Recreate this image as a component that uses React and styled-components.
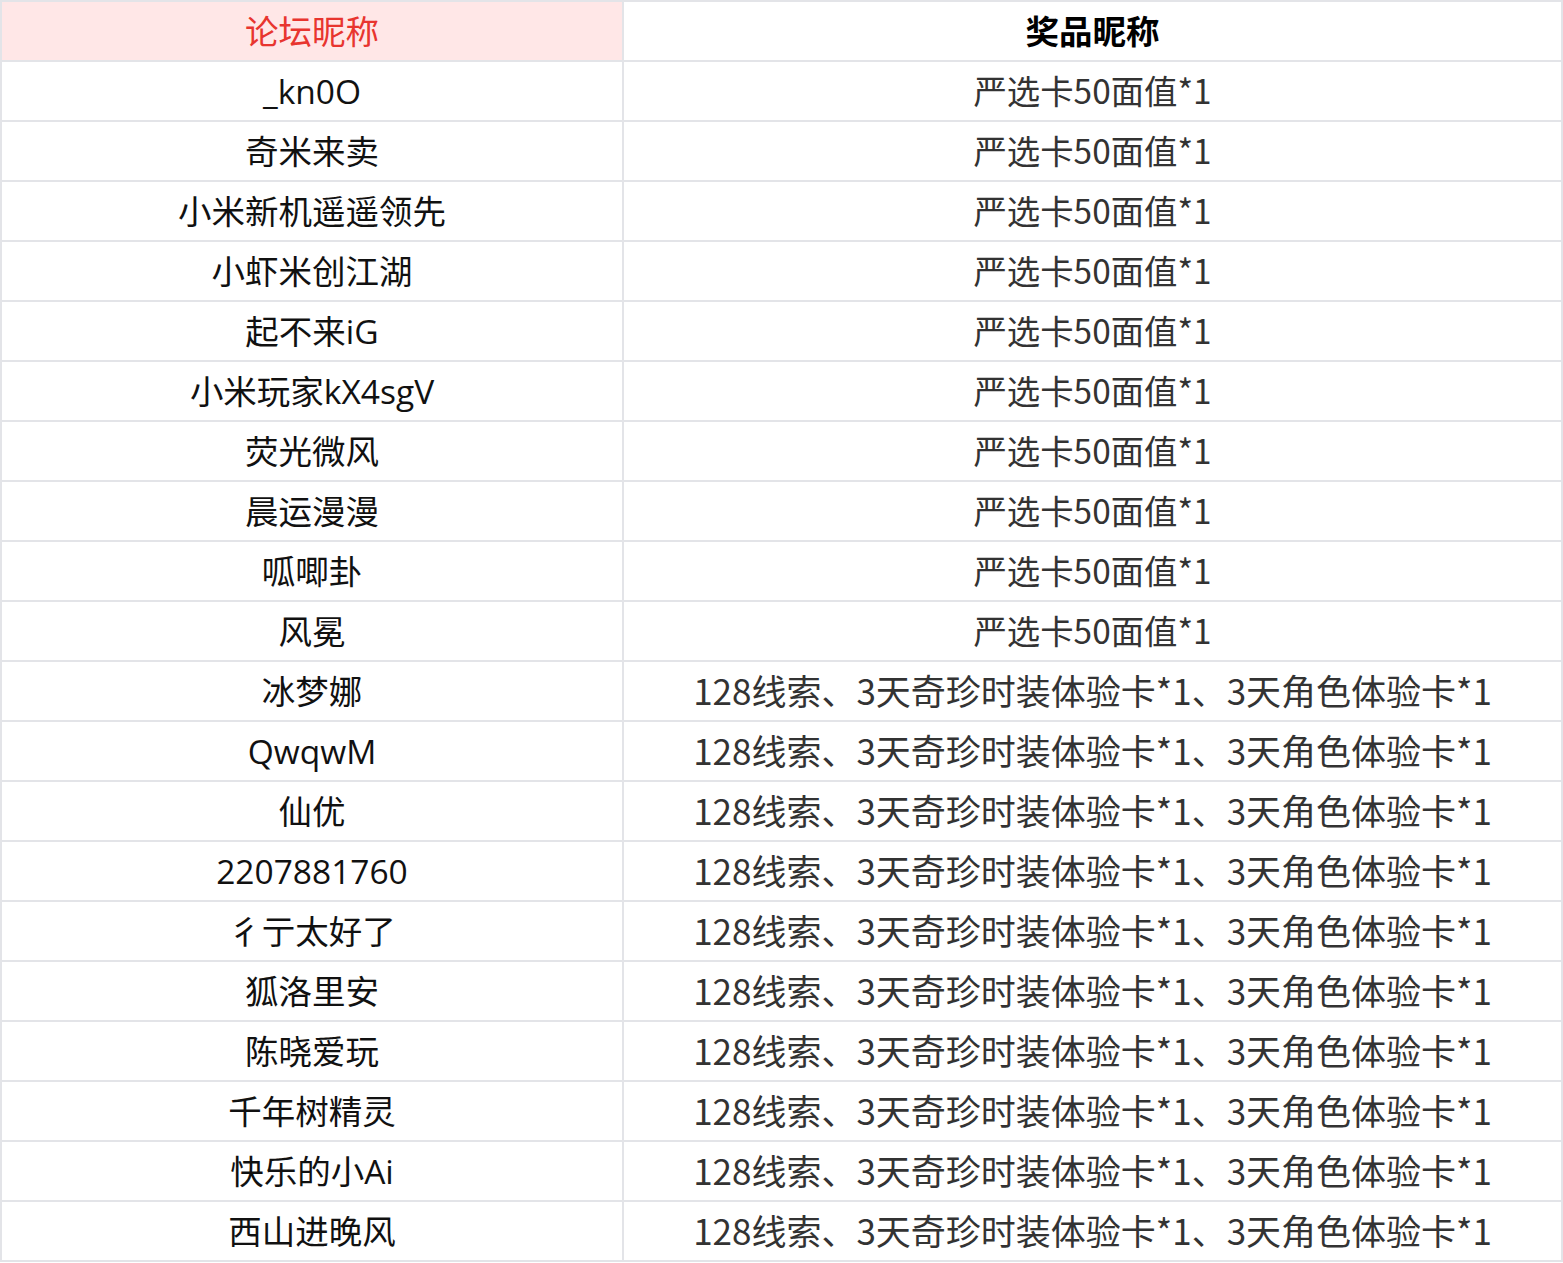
import React from "react";
import styled, { createGlobalStyle } from "styled-components";

const GlobalStyle = createGlobalStyle`
  html, body { margin: 0; padding: 0; background: #ffffff; }
  body { font-family: "Open Sans", "Noto Sans CJK SC", sans-serif; }
`;

const Grid = styled.div`
  display: grid;
  grid-template-columns: 620px 1fr;
  grid-auto-rows: 58px;
  gap: 2px;
  padding: 2px;
  background: #e3e4e8;
  width: 1563px;
  box-sizing: border-box;
`;

const Cell = styled.div`
  display: flex;
  align-items: center;
  justify-content: center;
  padding-top: ${(p) => (p.$muted || p.$bold ? "0" : "1px")};
  padding-bottom: ${(p) => (p.$muted || p.$bold ? "3px" : "0")};
  box-sizing: border-box;
  background: ${(p) => (p.$highlight ? "#ffe7e7" : "#ffffff")};
  color: ${(p) => (p.$highlight ? "#e8352f" : p.$bold ? "#000000" : p.$muted ? "#333333" : "#111111")};
  font-weight: ${(p) => (p.$bold ? 700 : 400)};
  font-family: ${(p) => (p.$muted || p.$bold ? '"Noto Sans CJK SC", sans-serif' : '"Open Sans", "Noto Sans CJK SC", sans-serif')};
  font-size: ${(p) => p.$size || "33.5px"};
  white-space: nowrap;
  line-height: 1;
`;

const SHORT = "严选卡50面值*1";
const LONG = "128线索、3天奇珍时装体验卡*1、3天角色体验卡*1";

const rows = [
  ["_kn0O", SHORT],
  ["奇米来卖", SHORT],
  ["小米新机遥遥领先", SHORT],
  ["小虾米创江湖", SHORT],
  ["起不来iG", SHORT],
  ["小米玩家kX4sgV", SHORT],
  ["荧光微风", SHORT],
  ["晨运漫漫", SHORT],
  ["呱唧卦", SHORT],
  ["风冕", SHORT],
  ["冰梦娜", LONG],
  ["QwqwM", LONG],
  ["仙优", LONG],
  ["2207881760", LONG],
  ["彳亍太好了", LONG],
  ["狐洛里安", LONG],
  ["陈晓爱玩", LONG],
  ["千年树精灵", LONG],
  ["快乐的小Ai", LONG],
  ["西山进晚风", LONG],
];

export default function App() {
  return (
    <>
      <GlobalStyle />
      <Grid>
        <Cell $highlight>论坛昵称</Cell>
        <Cell $bold>奖品昵称</Cell>
        {rows.map(([name, prize], i) => (
          <React.Fragment key={i}>
            <Cell>{name}</Cell>
            <Cell $muted $size={prize === LONG ? "35px" : "33.4px"}>
              {prize}
            </Cell>
          </React.Fragment>
        ))}
      </Grid>
    </>
  );
}
